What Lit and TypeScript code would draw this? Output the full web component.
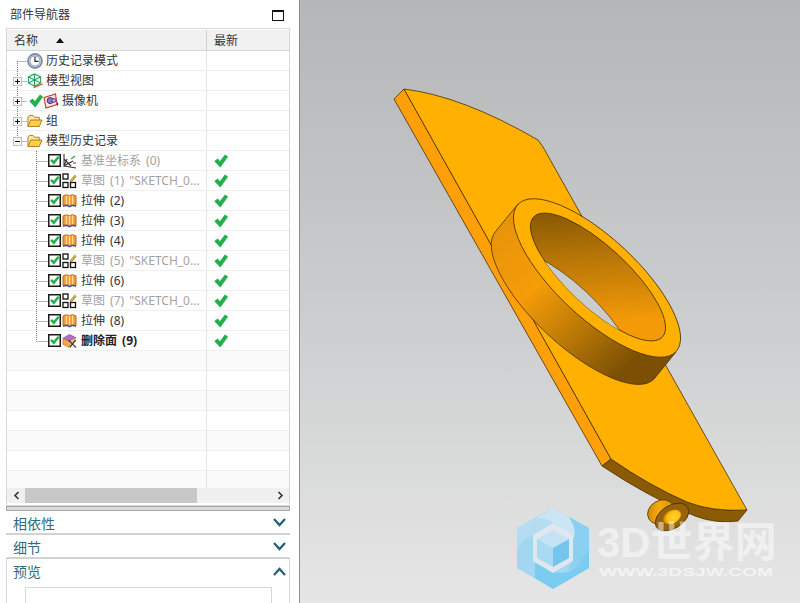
import { LitElement, html, css, svg } from "lit";
import { customElement } from "lit/decorators.js";

type Icon = "clock" | "cube" | "camera" | "folder" | "csys" | "sketch" | "extrude" | "delete";
interface Row {
  level: 0 | 1;
  icon: Icon;
  text: string;
  expander?: "+" | "-";
  tick?: boolean;
  muted?: boolean;
  bold?: boolean;
  done?: boolean;
  first?: boolean;
  last?: boolean;
}

const ROWS: Row[] = [
  { level: 0, icon: "clock", text: "历史记录模式", first: true },
  { level: 0, icon: "cube", text: "模型视图", expander: "+" },
  { level: 0, icon: "camera", text: "摄像机", expander: "+", tick: true },
  { level: 0, icon: "folder", text: "组", expander: "+" },
  { level: 0, icon: "folder", text: "模型历史记录", expander: "-", last: true },
  { level: 1, icon: "csys", text: "基准坐标系 (0)", muted: true, done: true, first: true },
  { level: 1, icon: "sketch", text: "草图 (1) \"SKETCH_0...", muted: true, done: true },
  { level: 1, icon: "extrude", text: "拉伸 (2)", done: true },
  { level: 1, icon: "extrude", text: "拉伸 (3)", done: true },
  { level: 1, icon: "extrude", text: "拉伸 (4)", done: true },
  { level: 1, icon: "sketch", text: "草图 (5) \"SKETCH_0...", muted: true, done: true },
  { level: 1, icon: "extrude", text: "拉伸 (6)", done: true },
  { level: 1, icon: "sketch", text: "草图 (7) \"SKETCH_0...", muted: true, done: true },
  { level: 1, icon: "extrude", text: "拉伸 (8)", done: true },
  { level: 1, icon: "delete", text: "删除面 (9)", bold: true, done: true, last: true },
];

const tick = (cls: string) => html`<svg class="ic ${cls}" width="14" height="14" viewBox="0 0 14 14">
  <path d="M.6 7.2 L3.6 4.8 L5.9 7.4 L11 .8 L13.8 2.8 L6.3 13.2 Z" fill="#1fb24a" stroke="#149a3a" stroke-width=".4"/>
</svg>`;

const checkbox = html`<svg class="ic" width="13" height="13" viewBox="0 0 13 13">
  <rect x=".75" y=".75" width="11.5" height="11.5" fill="#fff" stroke="#1a1a1a" stroke-width="1.5"/>
  <path d="M2.2 6.4 L4 4.9 L5.6 6.8 L9.8 2 L11.6 3.4 L5.8 10.8 Z" fill="#1fb24a"/>
</svg>`;

const ICONS: Record<Icon, unknown> = {
  clock: html`<svg class="ic" width="16" height="16" viewBox="0 0 16 16">
    <circle cx="8" cy="8" r="7" fill="#dfe4ee" stroke="#7f8ea8" stroke-width="1.8"/>
    <circle cx="8" cy="8" r="5" fill="#fff" stroke="#3c4660" stroke-width=".5"/>
    <path d="M8 3.8 V8.4 H11.6" fill="none" stroke="#1e2840" stroke-width="1.2"/>
  </svg>`,
  cube: html`<svg class="ic" width="16" height="16" viewBox="0 0 17 17">
    <path d="M8 1 L14.5 4 V10.5 L8 14 L1.5 10.5 V4 Z M1.5 4 L8 7.4 L14.5 4 M8 7.4 V14 M1.5 10.5 L8 7.4 L14.5 10.5 M8 1 V7.4" fill="#e8f8ee" stroke="#1f9e5c" stroke-width="1.1"/>
    <path d="M7 15.5 L16.5 11.5" stroke="#d8553a" stroke-width="1.4"/>
  </svg>`,
  camera: html`<svg class="ic" width="16" height="16" viewBox="0 0 16 16">
    <path d="M1 4.5 L12.5 1 L14 11.5 L3 15 Z" fill="#f8e4e0" stroke="#c8342c" stroke-width="1.1"/>
    <circle cx="7.2" cy="7.6" r="3" fill="#8a7ac8" stroke="#3c2e78"/>
    <circle cx="10.8" cy="7.4" r="2" fill="#b8a8e0" stroke="#3c2e78" stroke-width=".8"/>
    <path d="M14 9 L15.5 11 L14 13" fill="#222"/>
  </svg>`,
  folder: html`<svg class="ic" width="16" height="14" viewBox="0 0 17 14">
    <path d="M1 12.5 V3 L2.5 1.2 H6.5 L8 3 H13 V6" fill="#fbe7a6" stroke="#a87a1a"/>
    <path d="M1 12.8 L4 6 H16 L13 12.8 Z" fill="#ffcf4a" stroke="#a87a1a"/>
  </svg>`,
  csys: html`<svg class="ic" width="15" height="16" viewBox="0 0 15 16">
    <path d="M2 1 V13 L11 8 M2 13 L14 15 M2 6 L9 13 M2 13 L5 6" fill="none" stroke="#333" stroke-width="1.1"/>
    <path d="M9 6 L13 3" stroke="#3aa050" stroke-width="1.2"/>
    <path d="M11 10 L14 10" stroke="#c04030" stroke-width="1.2"/>
  </svg>`,
  sketch: html`<svg class="ic" width="15" height="16" viewBox="0 0 15 16">
    <rect x="1" y="1" width="5" height="5" fill="#fff" stroke="#111" stroke-width="1.3"/>
    <rect x="1" y="9.5" width="5" height="5" fill="#fff" stroke="#111" stroke-width="1.3"/>
    <rect x="8.5" y="9.5" width="5" height="5" fill="#fff" stroke="#111" stroke-width="1.3"/>
    <path d="M8 8 L12.6 2.2 L14.2 3.4 L9.6 8.8 Z" fill="#e8b040" stroke="#7a5a20" stroke-width=".6"/>
  </svg>`,
  extrude: html`<svg class="ic" width="15" height="15" viewBox="0 0 15 15">
    <path d="M1 3 Q4 .8 7.5 2.6 Q11 .8 14 3 V12.5 Q11 10.5 7.5 12.6 Q4 10.5 1 12.5 Z" fill="#f29a36" stroke="#b8681a"/>
    <path d="M4.4 2.4 V11.4 M7.5 2.6 V12.6 M10.6 2.4 V11.4" stroke="#fbdc9c" stroke-width="1.3"/>
    <path d="M1 13.4 Q4 11.4 7.5 13.6 Q11 11.4 14 13.4" fill="none" stroke="#4a50a8" stroke-width="1.4"/>
  </svg>`,
  delete: html`<svg class="ic" width="15" height="16" viewBox="0 0 16 16">
    <path d="M1 5 L8 1 L15 4.5 L8 8.5 Z" fill="#b070c8" stroke="#7a4a90" stroke-width=".7"/>
    <path d="M1 5 L8 8.5 V15 L1 11.5 Z" fill="#f0a850" stroke="#b87020" stroke-width=".7"/>
    <path d="M8 8.5 L15 4.5 V8 L8 15 Z" fill="#f4c078"/>
    <path d="M7 7 L15 15 M14.5 7 L8.5 14.5" stroke="#303030" stroke-width="1.3"/>
  </svg>`,
};

/* Tree gutter: dotted connectors and the +/- box, drawn per row. */
function gutter(r: Row) {
  const w = r.level === 0 ? 20 : 41;
  return html`<svg class="ic" width=${w} height="20" viewBox="0 0 ${w} 20">
    ${r.level === 0
      ? svg`<path d="M10.5 ${r.first ? 10 : 0} V${r.last ? 10 : 20} M10.5 10.5 H20" fill="none" stroke="#777" stroke-dasharray="1 1"/>`
      : svg`<path d="M29.5 0 V${r.last ? 10 : 20} M29.5 10.5 H41" fill="none" stroke="#777" stroke-dasharray="1 1"/>`}
    ${r.expander
      ? svg`<rect x="6.5" y="6.5" width="8" height="8" fill="#f6f6f6" stroke="#c0c0c0"/>
            <path d=${r.expander === "+" ? "M8 10.5 H13 M10.5 8 V13" : "M8 10.5 H13"} stroke="#111"/>`
      : null}
  </svg>`;
}

@customElement("app-root")
export class AppRoot extends LitElement {
  static styles = css`
    :host {
      display: flex;
      width: 800px;
      height: 603px;
      overflow: hidden;
      font-family: "Noto Sans", "Noto Sans CJK SC", sans-serif;
      font-size: 12px;
      color: #333;
    }
    .panel {
      width: 284px;
      flex: none;
      background: #fff;
      border-right: 1px solid #8f8f8f;
      display: flex;
      flex-direction: column;
      padding: 0 9px 0 6px;
    }
    .title {
      height: 28px;
      flex: none;
      display: flex;
      align-items: center;
      justify-content: space-between;
      padding: 0 6px 0 4px;
    }
    .maxbox {
      width: 10px;
      height: 8px;
      border: 1px solid #111;
      border-top-width: 2px;
      margin-top: 3px;
    }
    .tree {
      flex: none;
      height: 478px;
      box-sizing: border-box;
      border: 1px solid #d8d8d8;
      padding-top: 1px;
      display: flex;
      flex-direction: column;
      overflow: hidden;
    }
    .head {
      height: 21px;
      flex: none;
      display: flex;
      background: #f1f1f1;
      border-bottom: 1px solid #d6d6d6;
      box-sizing: border-box;
    }
    .c1 {
      width: 200px;
      flex: none;
      display: flex;
      align-items: center;
      box-sizing: border-box;
      white-space: nowrap;
      overflow: hidden;
      border-right: 1px solid #e4e4e4;
    }
    .c2 {
      flex: 1;
      display: flex;
      align-items: center;
      padding-left: 7px;
    }
    .head .c1 {
      padding-left: 7px;
      border-right-color: #d0d0d0;
    }
    .sort {
      width: 0;
      height: 0;
      border-left: 4px solid transparent;
      border-right: 4px solid transparent;
      border-bottom: 5px solid #111;
      margin-left: 18px;
    }
    .rows {
      flex: 1;
      min-height: 0;
      overflow: hidden;
    }
    .row {
      height: 20px;
      display: flex;
      box-sizing: border-box;
      border-bottom: 1px solid #efefef;
    }
    .row.empty:nth-child(even) {
      background: #fbfbfb;
    }
    .ic {
      display: block;
      flex: none;
    }
    .state {
      margin-left: 2px;
    }
    .lv1 .kind {
      margin-left: 1px;
    }
    .kind {
      display: flex;
      align-items: center;
    }
    .label {
      margin-left: 3px;
      line-height: 20px;
      word-spacing: 2px;
    }
    .lv1 .label {
      margin-left: 4px;
    }
    .muted {
      color: #a3a3a3;
    }
    .bold {
      font-weight: 700;
      color: #222;
    }
    .scroll {
      height: 15px;
      flex: none;
      display: flex;
      align-items: center;
      background: #f0f0f0;
      margin-bottom: 2px;
    }
    .arrow {
      width: 18px;
      flex: none;
      display: flex;
      justify-content: center;
    }
    .thumb {
      width: 172px;
      height: 100%;
      background: #c8c8c8;
      flex: none;
    }
    .track {
      flex: 1;
    }
    .split {
      height: 5px;
      flex: none;
      box-sizing: border-box;
      background: #dcdcdc;
      border: 1px solid #a8a8a8;
    }
    .section {
      height: 24px;
      flex: none;
      box-sizing: border-box;
      display: flex;
      align-items: center;
      justify-content: space-between;
      padding: 1px 4px 0 7px;
      color: #2f6b80;
      font-size: 14px;
      border-bottom: 2px solid #d2d2d2;
    }
    .section.open {
      border-bottom: none;
      border-left: 1px solid #d8d8d8;
      border-right: 1px solid #d8d8d8;
      padding: 0 3px 0 6px;
    }
    .sides {
      flex: 1;
      min-height: 0;
      display: flex;
      flex-direction: column;
    }
    .body {
      flex: 1;
      border-left: 1px solid #d8d8d8;
      border-right: 1px solid #d8d8d8;
      padding: 4px 17px 0 18px;
    }
    .preview {
      height: 30px;
      border: 1px solid #d8d8d8;
    }
    .view {
      flex: 1;
      min-width: 0;
      display: block;
    }
    .view svg {
      display: block;
    }
    .wm-big {
      font: 700 42px "Liberation Sans", "Noto Sans CJK SC", sans-serif;
      fill: rgba(255, 255, 255, 0.5);
    }
    .wm-small {
      font: 700 10.5px "Liberation Sans", sans-serif;
      fill: rgba(255, 255, 255, 0.6);
    }
  `;

  private chevron(up: boolean) {
    return html`<svg class="ic" width="13" height="9" viewBox="0 0 13 9">
      <path d=${up ? "M1 8 L6.5 2 L12 8" : "M1 1 L6.5 7 L12 1"} fill="none" stroke="#1f5f78" stroke-width="2.2"/>
    </svg>`;
  }

  private renderRow(r: Row) {
    return html`<div class="row ${r.level === 0 ? "lv0" : "lv1"}">
      <div class="c1">
        ${gutter(r)} ${r.tick ? tick("state") : null} ${r.level === 1 ? checkbox : null}
        <span class="kind">${ICONS[r.icon]}</span>
        <span class="label ${r.muted ? "muted" : ""} ${r.bold ? "bold" : ""}">${r.text}</span>
      </div>
      <div class="c2">${r.done ? tick("") : null}</div>
    </div>`;
  }

  private renderView() {
    const stroke = "#4a3000";
    return html`<svg width="500" height="603" viewBox="300 0 500 603">
      <defs>
        <linearGradient id="bg" x1="0" y1="0" x2="0" y2="1">
          <stop offset="0" stop-color="#b4b6b8"/>
          <stop offset=".5" stop-color="#cbcccd"/>
          <stop offset="1" stop-color="#e6e6e6"/>
        </linearGradient>
        <linearGradient id="wall" gradientUnits="userSpaceOnUse" x1="505" y1="225" x2="655" y2="385">
          <stop offset="0" stop-color="#e8940a"/>
          <stop offset=".3" stop-color="#f59c08"/>
          <stop offset=".55" stop-color="#c07c06"/>
          <stop offset=".85" stop-color="#7c5004"/>
          <stop offset="1" stop-color="#7c5004"/>
        </linearGradient>
        <linearGradient id="inner" gradientUnits="userSpaceOnUse" x1="545" y1="220" x2="650" y2="320">
          <stop offset="0" stop-color="#7e5204"/>
          <stop offset=".4" stop-color="#b87606"/>
          <stop offset=".85" stop-color="#f49a08"/>
        </linearGradient>
        <linearGradient id="bossSide" x1="0" y1="0" x2="1" y2=".6">
          <stop offset="0" stop-color="#b87a06"/>
          <stop offset=".5" stop-color="#f8aa10"/>
          <stop offset="1" stop-color="#d88c08"/>
        </linearGradient>
        <radialGradient id="bore" cx=".6" cy=".55" r=".6">
          <stop offset="0" stop-color="#ffd82e"/>
          <stop offset=".7" stop-color="#ffb810"/>
          <stop offset="1" stop-color="#c88006"/>
        </radialGradient>
        <clipPath id="holeClip">
          <ellipse cx="598" cy="277" rx="88" ry="30" transform="rotate(43 598 277)"/>
        </clipPath>
      </defs>

      <rect x="300" y="0" width="500" height="603" fill="url(#bg)"/>

      <!-- plate -->
      <path d="M394 99 L404 89 L611 459 L602 466 Z" fill="#ff9f0a" stroke=${stroke} stroke-width=".8"/>
      <path d="M602 466 L611 459 Q650 486 687 502 Q712 512 747 510 L738 521 Q716 524 695 516 Q650 498 602 466 Z" fill="#8a5a04" stroke=${stroke} stroke-width=".8"/>
      <path d="M404 89 Q462 96 538 140 L543 147 L747 510 Q712 512 687 502 Q650 486 611 459 Z" fill="#ffb000" stroke=${stroke} stroke-width=".8"/>

      <!-- boss -->
      <ellipse cx="661" cy="512" rx="14" ry="11.5" transform="rotate(-30 661 512)" fill="url(#bossSide)" stroke=${stroke} stroke-width=".7"/>
      <ellipse cx="672" cy="517" rx="18.5" ry="11.5" transform="rotate(-32 672 517)" fill="#96620a" stroke=${stroke} stroke-width=".8"/>
      <ellipse cx="672" cy="517" rx="9.5" ry="6.5" transform="rotate(-30 672 517)" fill="url(#bore)"/>

      <!-- ring wall: outer ellipse swept toward the lower left -->
      <path d="M518 204 L496 231 A108 40 43 0 0 654 379 L676 352 Z" fill="url(#wall)" stroke=${stroke} stroke-width=".8"/>
      <!-- ring face -->
      <ellipse cx="597" cy="278" rx="108" ry="40" transform="rotate(43 597 278)" fill="#ffb000" stroke=${stroke} stroke-width=".8"/>
      <!-- inner wall and see-through hole -->
      <ellipse cx="598" cy="277" rx="88" ry="30" transform="rotate(43 598 277)" fill="url(#inner)" stroke=${stroke} stroke-width=".8"/>
      <g clip-path="url(#holeClip)">
        <ellipse cx="566" cy="314" rx="88" ry="30" transform="rotate(43 566 314)" fill="#cbcccd" stroke=${stroke} stroke-width=".6"/>
      </g>

      <!-- watermark -->
      <g>
        <path d="M553 508 L589 528 V568 L553 589 L517 568 V528 Z" fill="#a6d7f1"/>
        <path d="M533 520 L553 508 L569 517 Q578 530 573 541 L553 523 Q543 516 533 520 Z" fill="#cbe5f4"/>
        <path d="M569 517 L589 528 V548 Q583 565 568 570 L573 558 V541 Q578 530 569 517 Z" fill="#8bcff1"/>
        <path d="M535 563 L553 572 Q575 578 589 548 V568 L553 589 L535 578 Z" fill="#7accf1"/>
        <path d="M517 550 Q520 535 533 532 V563 L535 578 L517 568 Z" fill="#a3d6f0"/>
        <path d="M517 528 L533 520 Q545 516 553 523 L533 535 Q520 540 517 550 Z" fill="#b6dcf2"/>
        <path d="M553 523 L573 535 V561 L553 573 L533 561 V535 Z" fill="#dfe8ee"/>
        <path d="M553 530 L569 539 L553 548 L537 539 Z" fill="#c5e3f4"/>
        <path d="M537 539 L553 548 V567 L537 558 Z" fill="#a8daf4"/>
        <path d="M569 539 V558 L553 567 V548 Z" fill="#76c5ee"/>
        <text class="wm-big" x="597" y="557">3D世界网</text>
        <text class="wm-small" x="599" y="576" textLength="174" lengthAdjust="spacingAndGlyphs">WWW.3DSJW.COM</text>
      </g>
    </svg>`;
  }

  render() {
    return html`
      <div class="panel">
        <div class="title"><span>部件导航器</span><span class="maxbox"></span></div>
        <div class="tree">
          <div class="head">
            <div class="c1">名称<span class="sort"></span></div>
            <div class="c2">最新</div>
          </div>
          <div class="rows">
            ${ROWS.map((r) => this.renderRow(r))}
            ${Array.from({ length: 7 }, () => html`<div class="row empty"><div class="c1"></div><div class="c2"></div></div>`)}
          </div>
          <div class="scroll">
            <div class="arrow">
              <svg class="ic" width="7" height="9" viewBox="0 0 7 9"><path d="M5.5 1 L2 4.5 L5.5 8" fill="none" stroke="#333" stroke-width="1.6"/></svg>
            </div>
            <div class="thumb"></div>
            <div class="track"></div>
            <div class="arrow">
              <svg class="ic" width="7" height="9" viewBox="0 0 7 9"><path d="M1.5 1 L5 4.5 L1.5 8" fill="none" stroke="#333" stroke-width="1.6"/></svg>
            </div>
          </div>
        </div>
        <div class="split"></div>
        <div class="section"><span>相依性</span>${this.chevron(false)}</div>
        <div class="section"><span>细节</span>${this.chevron(false)}</div>
        <div class="sides">
          <div class="section open"><span>预览</span>${this.chevron(true)}</div>
          <div class="body"><div class="preview"></div></div>
        </div>
      </div>
      <div class="view">${this.renderView()}</div>
    `;
  }
}
